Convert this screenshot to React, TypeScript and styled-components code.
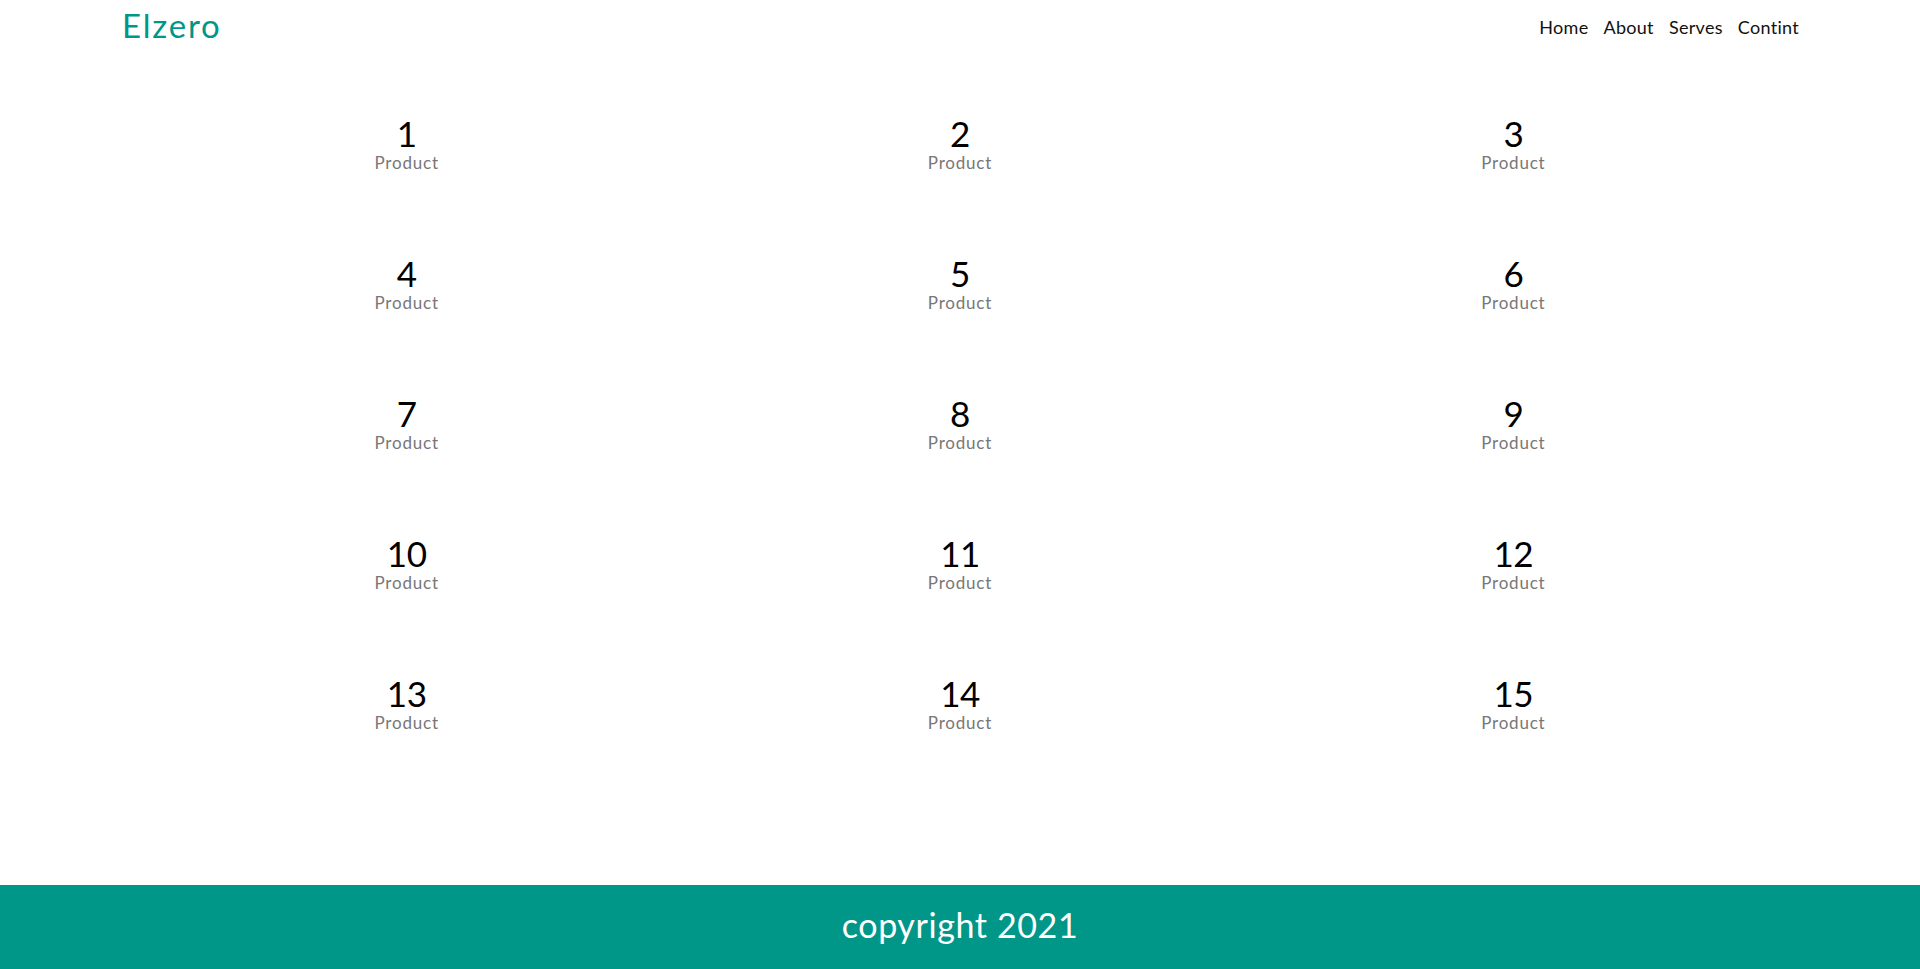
import React from "react";
import styled, { createGlobalStyle } from "styled-components";

const GlobalStyle = createGlobalStyle`
  * {
    box-sizing: border-box;
  }
  body {
    margin: 0;
    font-family: "Lato", "Noto Sans", sans-serif;
    background: #fff;
  }
`;

const Page = styled.div`
  min-height: 969px;
  display: flex;
  flex-direction: column;
`;

const Header = styled.header`
  height: 50px;
  padding: 0 121px 0 122px;
  display: flex;
  align-items: center;
  justify-content: space-between;
`;

const Logo = styled.div`
  color: #009688;
  font-size: 33px;
  letter-spacing: 1.8px;
`;

const Nav = styled.nav`
  display: flex;
  gap: 15px;
  padding-top: 3px;
`;

const NavLink = styled.a`
  color: #111;
  font-size: 18px;
  text-decoration: none;
  letter-spacing: 0.3px;
`;

const Main = styled.main`
  flex: 1;
  padding: 63px 130px 0;
`;

const Grid = styled.div`
  display: grid;
  grid-template-columns: repeat(3, 1fr);
  row-gap: 80px;
`;

const Card = styled.div`
  display: flex;
  flex-direction: column;
  align-items: center;
`;

const Num = styled.div`
  font-size: 35px;
  line-height: 40px;
  color: #000;
  letter-spacing: -0.5px;
`;

const Label = styled.div`
  font-size: 17px;
  line-height: 20px;
  color: #777;
  letter-spacing: 0.8px;
`;

const Footer = styled.footer`
  height: 84px;
  padding-bottom: 6px;
  background: #009688;
  color: #fff;
  display: flex;
  align-items: center;
  justify-content: center;
  font-size: 34px;
  letter-spacing: 0.6px;
`;

const links = ["Home", "About", "Serves", "Contint"];

export default function App() {
  return (
    <Page>
      <GlobalStyle />
      <Header>
        <Logo>Elzero</Logo>
        <Nav>
          {links.map((l) => (
            <NavLink key={l} href="#">
              {l}
            </NavLink>
          ))}
        </Nav>
      </Header>
      <Main>
        <Grid>
          {Array.from({ length: 15 }, (_, i) => (
            <Card key={i}>
              <Num>{i + 1}</Num>
              <Label>Product</Label>
            </Card>
          ))}
        </Grid>
      </Main>
      <Footer>copyright 2021</Footer>
    </Page>
  );
}
